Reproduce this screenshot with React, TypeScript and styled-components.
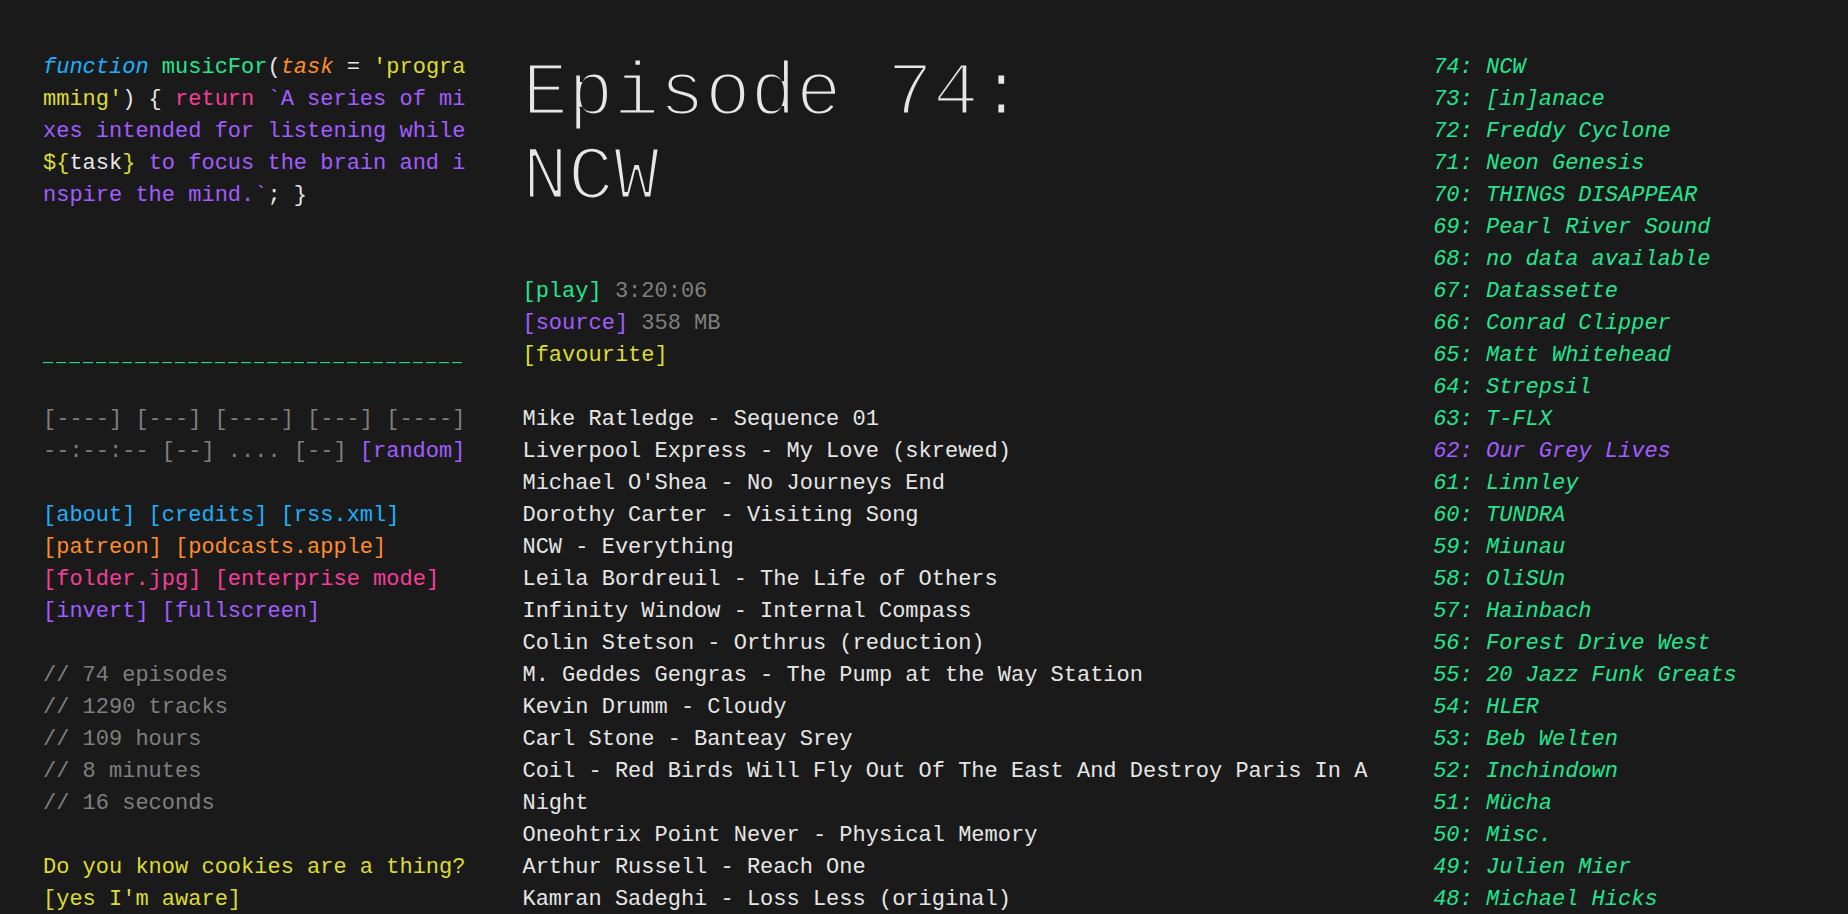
import React from 'react';
import styled, { createGlobalStyle, ThemeProvider } from 'styled-components';

const theme = {
  bg: '#1a1a1a',
  text: '#e6e6e6',
  grey: '#7f7f7f',
  green: '#22e68f',
  purple: '#a35cff',
  yellow: '#dcdc32',
  blue: '#1eb0fa',
  orange: '#ff8c28',
  pink: '#f43e9a',
};

type Tone = keyof typeof theme;

const GlobalStyle = createGlobalStyle`
  *, *::before, *::after { box-sizing: border-box; }
  body {
    margin: 0;
    background: ${theme.bg};
    color: ${theme.text};
    font-family: "Liberation Mono", monospace;
    font-size: 22px;
    line-height: 32px;
    font-variant-ligatures: none;
  }
`;

const Page = styled.div`
  display: grid;
  grid-template-columns: 32ch minmax(0, 7fr) minmax(0, 3fr);
  column-gap: 50px;
  height: 100vh;
  padding: 52px 43px 0;
  overflow: hidden;
`;

const Sidebar = styled.aside`
  display: flex;
  flex-direction: column;
  gap: 32px;
`;

const Code = styled.code`
  display: block;
  height: 256px;
  font-family: inherit;
  white-space: pre;
`;

const CodeLine = styled.span`
  display: block;
`;

const Ink = styled.span<{ $tone: Tone; $italic?: boolean }>`
  color: ${({ theme: t, $tone }) => (t as typeof theme)[$tone]};
  font-style: ${({ $italic }) => ($italic ? 'italic' : 'normal')};
`;

const Progress = styled.div`
  color: ${theme.green};
  mask-image: repeating-linear-gradient(
    to right,
    #000 0,
    #000 calc(1ch - 3px),
    transparent calc(1ch - 3px),
    transparent 1ch
  );
`;

const Player = styled.div`
  display: flex;
  flex-direction: column;
`;

const Row = styled.div`
  display: flex;
  gap: 1ch;
  white-space: nowrap;
`;

const TextButton = styled.button<{ $tone: Tone }>`
  padding: 0;
  border: 0;
  background: none;
  color: ${({ theme: t, $tone }) => (t as typeof theme)[$tone]};
  font: inherit;
  cursor: pointer;

  &:disabled { cursor: default; }
  &:hover:enabled { text-decoration: underline; }
`;

const TextLink = styled.a<{ $tone: Tone }>`
  color: ${({ theme: t, $tone }) => (t as typeof theme)[$tone]};
  text-decoration: none;

  &:hover { text-decoration: underline; }
`;

const Stats = styled.div`
  color: ${theme.grey};
`;

const Notice = styled.div`
  color: ${theme.yellow};
  white-space: nowrap;
`;

const Main = styled.main`
  padding-left: 7px;
`;

/* The background-coloured outline trims each stroke to a hairline. */
const Title = styled.h1`
  margin: 0 0 56px;
  font-size: 76px;
  font-weight: 400;
  line-height: 84px;
  -webkit-text-stroke: 3px ${theme.bg};
`;

const TrackList = styled.ul`
  margin: 32px 0 0;
  padding: 0;
  list-style: none;
`;

const Episodes = styled.nav`
  font-style: italic;
`;

const EpisodeList = styled.ul`
  margin: 0;
  padding: 0;
  list-style: none;
  white-space: nowrap;
`;

const links: { tone: Tone; items: string[] }[] = [
  { tone: 'blue', items: ['about', 'credits', 'rss.xml'] },
  { tone: 'orange', items: ['patreon', 'podcasts.apple'] },
  { tone: 'pink', items: ['folder.jpg', 'enterprise mode'] },
];

const stats = ['74 episodes', '1290 tracks', '109 hours', '8 minutes', '16 seconds'];

const tracks = [
  'Mike Ratledge - Sequence 01',
  'Liverpool Express - My Love (skrewed)',
  "Michael O'Shea - No Journeys End",
  'Dorothy Carter - Visiting Song',
  'NCW - Everything',
  'Leila Bordreuil - The Life of Others',
  'Infinity Window - Internal Compass',
  'Colin Stetson - Orthrus (reduction)',
  'M. Geddes Gengras - The Pump at the Way Station',
  'Kevin Drumm - Cloudy',
  'Carl Stone - Banteay Srey',
  'Coil - Red Birds Will Fly Out Of The East And Destroy Paris In A Night',
  'Oneohtrix Point Never - Physical Memory',
  'Arthur Russell - Reach One',
  'Kamran Sadeghi - Loss Less (original)',
];

const latestEpisode = 74;
const lastHeard = 62;
const episodes = [
  'NCW', '[in]anace', 'Freddy Cyclone', 'Neon Genesis', 'THINGS DISAPPEAR',
  'Pearl River Sound', 'no data available', 'Datassette', 'Conrad Clipper',
  'Matt Whitehead', 'Strepsil', 'T-FLX', 'Our Grey Lives', 'Linnley', 'TUNDRA',
  'Miunau', 'OliSUn', 'Hainbach', 'Forest Drive West', '20 Jazz Funk Greats',
  'HLER', 'Beb Welten', 'Inchindown', 'Mücha', 'Misc.', 'Julien Mier',
  'Michael Hicks',
];

function Intro() {
  return (
    <Code>
      <CodeLine>
        <Ink $tone="blue" $italic>function</Ink>{' '}
        <Ink $tone="green">musicFor</Ink>(<Ink $tone="orange" $italic>task</Ink>{' = '}
        <Ink $tone="yellow">'progra</Ink>
      </CodeLine>
      <CodeLine>
        <Ink $tone="yellow">mming'</Ink>{') { '}
        <Ink $tone="pink">return</Ink>{' '}
        <Ink $tone="purple">`A series of mi</Ink>
      </CodeLine>
      <CodeLine>
        <Ink $tone="purple">xes intended for listening while</Ink>
      </CodeLine>
      <CodeLine>
        <Ink $tone="yellow">{'${'}</Ink>task<Ink $tone="yellow">{'}'}</Ink>{' '}
        <Ink $tone="purple">to focus the brain and i</Ink>
      </CodeLine>
      <CodeLine>
        <Ink $tone="purple">nspire the mind.`</Ink>{'; }'}
      </CodeLine>
    </Code>
  );
}

export default function App() {
  return (
    <ThemeProvider theme={theme}>
      <GlobalStyle />
      <Page>
        <Sidebar>
          <Intro />
          <Progress>{'_'.repeat(32)}</Progress>
          <Player>
            <Row>
              {['----', '---', '----', '---', '----'].map((label, i) => (
                <TextButton key={i} $tone="grey" disabled>[{label}]</TextButton>
              ))}
            </Row>
            <Row>
              <Ink $tone="grey">--:--:--</Ink>
              <TextButton $tone="grey" disabled>[--]</TextButton>
              <Ink $tone="grey">....</Ink>
              <TextButton $tone="grey" disabled>[--]</TextButton>
              <TextButton $tone="purple">[random]</TextButton>
            </Row>
          </Player>
          <div>
            {links.map(({ tone, items }) => (
              <Row key={tone}>
                {items.map((item) => (
                  <TextLink key={item} $tone={tone} href="#">[{item}]</TextLink>
                ))}
              </Row>
            ))}
            <Row>
              <TextButton $tone="purple">[invert]</TextButton>
              <TextButton $tone="purple">[fullscreen]</TextButton>
            </Row>
          </div>
          <Stats>
            {stats.map((line) => <div key={line}>// {line}</div>)}
          </Stats>
          <Notice>
            <div>Do you know cookies are a thing?</div>
            <Row><TextButton $tone="yellow">[yes I'm aware]</TextButton></Row>
          </Notice>
        </Sidebar>
        <Main>
          <Title>Episode 74:<br />NCW</Title>
          <Row>
            <TextButton $tone="green">[play]</TextButton>
            <Ink $tone="grey">3:20:06</Ink>
          </Row>
          <Row>
            <TextLink $tone="purple" href="#">[source]</TextLink>
            <Ink $tone="grey">358 MB</Ink>
          </Row>
          <Row><TextButton $tone="yellow">[favourite]</TextButton></Row>
          <TrackList>
            {tracks.map((track) => <li key={track}>{track}</li>)}
          </TrackList>
        </Main>
        <Episodes>
          <EpisodeList>
            {episodes.map((name, i) => {
              const number = latestEpisode - i;
              return (
                <li key={name}>
                  <TextLink $tone={number === lastHeard ? 'purple' : 'green'} href="#">
                    {number}: {name}
                  </TextLink>
                </li>
              );
            })}
          </EpisodeList>
        </Episodes>
      </Page>
    </ThemeProvider>
  );
}
